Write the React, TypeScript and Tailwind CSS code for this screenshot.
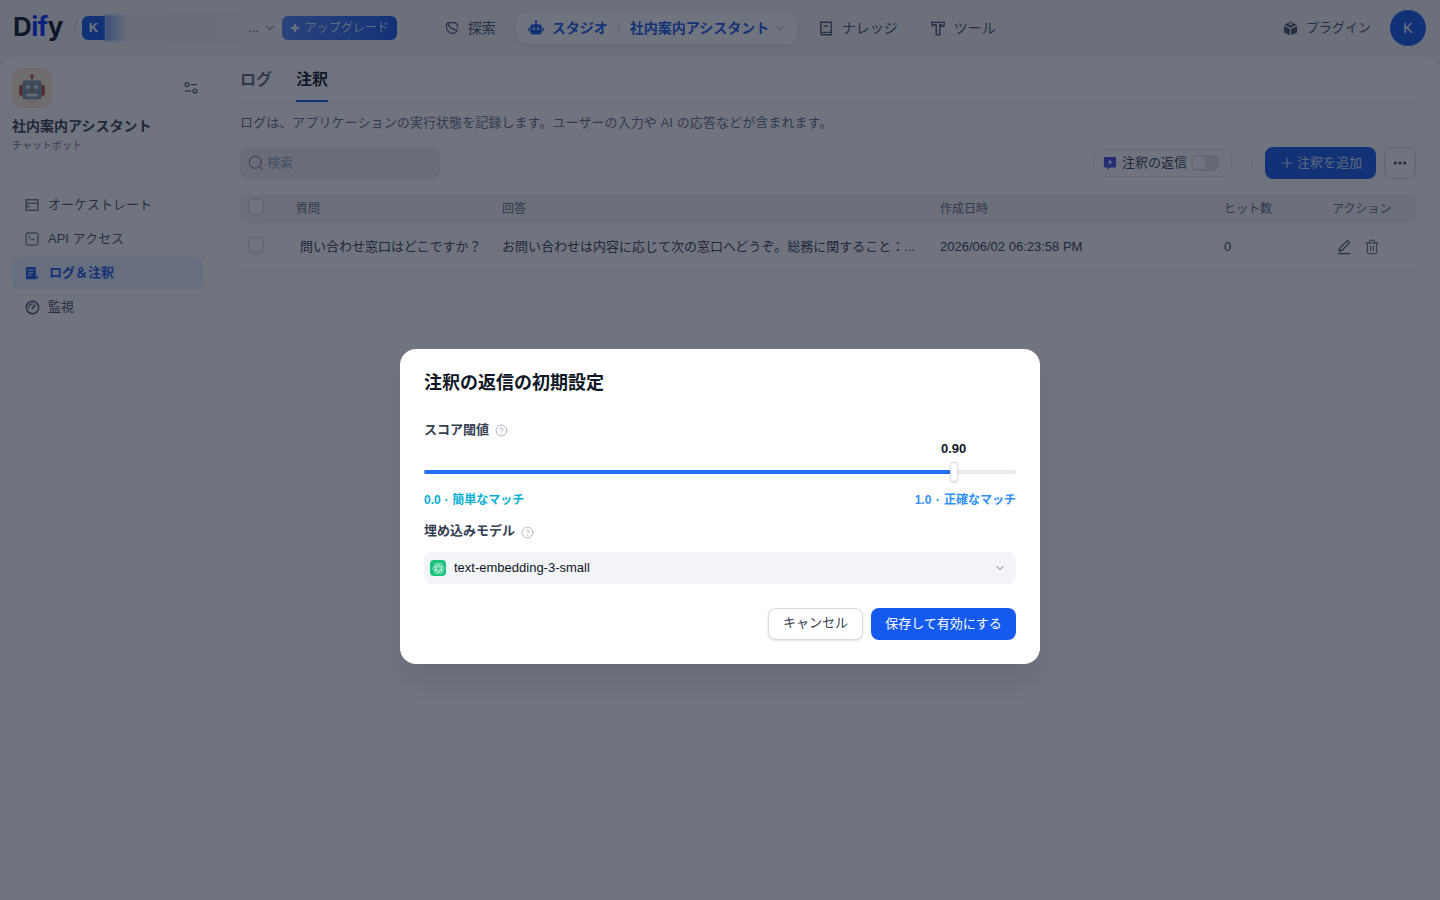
import React from "react";
import { ChevronDown, Plus, Search, Sparkle, Trash2, Ellipsis, SquareTerminal, CircleHelp } from "lucide-react";

const font = "font-['Liberation_Sans','Noto_Sans_CJK_JP',sans-serif]";

function Robot() {
  return (
    <svg viewBox="0 0 32 32" className="w-[30px] h-[30px]">
      <line x1="16" y1="3" x2="16" y2="8" stroke="#6b7c8c" strokeWidth="1.6" />
      <circle cx="16" cy="3.5" r="1.8" fill="#c0392b" />
      <rect x="2.5" y="13" width="3.5" height="11" rx="1.4" fill="#c0392b" />
      <rect x="26" y="13" width="3.5" height="11" rx="1.4" fill="#c0392b" />
      <rect x="5.5" y="8" width="21" height="20" rx="3.5" fill="#7f97ab" />
      <circle cx="11.5" cy="15" r="2.2" fill="#dfe7ee" />
      <circle cx="20.5" cy="15" r="2.2" fill="#dfe7ee" />
      <path d="M16 17l1.2 2h-2.4z" fill="#c0392b" />
      <rect x="10" y="22" width="12" height="3" rx="1" fill="#dfe7ee" />
    </svg>
  );
}

function ExploreIcon() {
  return (
    <svg viewBox="0 0 16 16" fill="none" stroke="currentColor" strokeWidth="1.3" className="w-[14px] h-[14px]">
      <path d="M3.2 1.8h6.2c3 0 5 2.2 5 5.2 0 .4 0 .8-.1 1.2" />
      <path d="M3.2 1.8C2 3 1.6 4.5 1.6 6.2c0 4.4 3.2 8 7.2 8 2.4 0 4.4-1.6 5.2-3.8" />
      <path d="M3.2 1.8c.6 4.6 4.6 8.4 10.8 8.6" />
    </svg>
  );
}

function BotIcon() {
  return (
    <svg viewBox="0 0 16 16" className="w-4 h-4" fill="currentColor">
      <circle cx="8" cy="1.6" r="1.3" />
      <rect x="7.4" y="2" width="1.2" height="3" />
      <rect x="2.2" y="4.2" width="11.6" height="10.2" rx="2.6" />
      <rect x="0.2" y="7.5" width="1.3" height="3.8" rx=".6" />
      <rect x="14.5" y="7.5" width="1.3" height="3.8" rx=".6" />
      <rect x="4.9" y="7.4" width="1.7" height="2.6" rx=".8" fill="#ffffff" />
      <rect x="9.4" y="7.4" width="1.7" height="2.6" rx=".8" fill="#ffffff" />
    </svg>
  );
}

function BookIcon() {
  return (
    <svg viewBox="0 0 16 16" fill="none" stroke="currentColor" strokeWidth="1.4" className="w-4 h-4">
      <path d="M2.8 12.4V2.2h10.4v12.6H4a1.2 1.2 0 0 1-1.2-1.2c0-.7.5-1.2 1.2-1.2h9.2" />
      <path d="M5.6 6h4.8" />
    </svg>
  );
}

function HammerIcon() {
  return (
    <svg viewBox="0 0 16 16" fill="none" stroke="currentColor" strokeWidth="1.4" strokeLinejoin="round" className="w-4 h-4">
      <path d="M1.6 2.4h12.8l-.4 3.8h-2.600V4.800H9.800v10H6.200v-10H4.400c-1 0-1.600.6-2.200 1.200z" />
    </svg>
  );
}

function CubeIcon() {
  return (
    <svg viewBox="0 0 16 16" className="w-[15px] h-[15px]" fill="currentColor">
      <path d="M8 .8l6.600 3.200L8 7.200 1.400 4z" />
      <path d="M1 5.200l6.400 3.100v7L1 12.200z" />
      <path d="M15 5.200L8.600 8.300v7l6.400-3.100z" />
      <ellipse cx="8" cy="3.200" rx="2" ry="1" fill="#f2f4f7" />
    </svg>
  );
}

function LayoutIcon() {
  return (
    <svg viewBox="0 0 16 16" fill="none" stroke="currentColor" strokeWidth="1.3" className="w-[14px] h-[14px]">
      <rect x="1.2" y="2" width="13.6" height="12" />
      <path d="M1.2 6h13.600M1.200 10h4.600" />
      <path d="M3 4h1M3 8h1" />
    </svg>
  );
}

function LogIcon() {
  return (
    <svg viewBox="0 0 16 16" className="w-[14px] h-[14px]" fill="currentColor">
      <path d="M2 1h9.600a.8.8 0 0 1 .8.8V15H2a.8.8 0 0 1-.8-.8V1.800A.8.8 0 0 1 2 1z" />
      <path d="M13.200 11H15v2.400a1.600 1.600 0 0 1-1.600 1.600h-.2z" />
      <path d="M3.600 4.600h6M3.600 7.600h6M3.600 10.600h3.600" stroke="#e8effe" strokeWidth="1.200" />
    </svg>
  );
}

function GaugeIcon() {
  return (
    <svg viewBox="0 0 16 16" fill="none" stroke="currentColor" strokeWidth="1.6" className="w-[15px] h-[15px]">
      <circle cx="8" cy="8" r="6.600" />
      <path d="M4 9a4 4 0 0 1 5-4.600" strokeWidth="1.300" />
      <path d="M7.200 9.600l4-4.400" strokeWidth="1.600" />
    </svg>
  );
}

function PenIcon() {
  return (
    <svg viewBox="0 0 16 16" fill="none" stroke="currentColor" strokeWidth="1.300" strokeLinejoin="round" className="w-4 h-4">
      <path d="M3.200 12l.6-2.800 6.800-6.800a1.300 1.300 0 0 1 1.900 0l.3.3a1.300 1.300 0 0 1 0 1.900L6 11.400z" />
      <path d="M1.800 14.600h12.400" />
    </svg>
  );
}

function ReplyIcon() {
  return (
    <svg viewBox="0 0 16 16" className="w-[14px] h-[14px]">
      <path d="M2.500 1h11A1.500 1.500 0 0 1 15 2.500v9a1.500 1.500 0 0 1-1.500 1.500H8l-3 2.600V13H2.500A1.500 1.500 0 0 1 1 11.500v-9A1.500 1.500 0 0 1 2.500 1z" fill="#444ce7" />
      <path d="M8.800 3.200L5.400 7.800h2.400l-.6 3 3.400-4.600H8.200z" fill="#ffffff" />
    </svg>
  );
}

function OpenAIIcon() {
  return (
    <span className="w-4 h-4 rounded-[4px] bg-[#19c37d] flex items-center justify-center shrink-0">
      <svg viewBox="0 0 16 16" fill="none" stroke="#ffffff" strokeWidth="0.7" className="w-[13px] h-[13px]">
        <circle cx="8" cy="8" r="2" />
        <ellipse cx="8" cy="8" rx="7" ry="3.400" />
        <ellipse cx="8" cy="8" rx="7" ry="3.400" transform="rotate(60 8 8)" />
        <ellipse cx="8" cy="8" rx="7" ry="3.400" transform="rotate(120 8 8)" />
      </svg>
    </span>
  );
}

function Check() {
  return <span className="block w-4 h-4 rounded-[4px] border border-[#d0d5dd] bg-[#fcfcfd] shadow-[0_1px_2px_rgba(16,24,40,0.05)]" />;
}

function NavItem({ icon, label, active }: { icon: React.ReactNode; label: string; active?: boolean }) {
  return (
    <div className={`h-8 rounded-lg flex items-center pl-3 text-[13px] ${active ? "bg-[#e8effe] text-[#155aef] font-semibold gap-[9px]" : "text-[#495464] gap-2"}`}>
      <span className="w-4 flex justify-center">{icon}</span>
      <span>{label}</span>
    </div>
  );
}

const cols = "grid grid-cols-[56px_206px_438px_285px_107px_84px] items-center";

export default function App() {
  return (
    <div className={`relative h-[900px] w-[1440px] overflow-hidden bg-[#f2f4f7] ${font}`}>
      {/* top bar */}
      <header className="h-14 flex items-center pl-[13px] pr-[14px] relative">
        <div className="w-[69px] flex items-center pb-[2px]">
          <span className="text-[26px] leading-none font-bold tracking-[-0.5px] text-[#101828] font-['Inter',sans-serif]">
            D<span className="text-[#0033ff]">if</span>y
          </span>
        </div>
        <span className="text-[#d0d5dd] text-base w-0 -ml-[9px] mr-[9px]">/</span>
        <div className="w-[23px] h-6 rounded-l-md bg-[#155aef] flex items-center justify-center text-white text-[13px] font-semibold">K</div>
        <div className="w-[138px] h-[26px] bg-[linear-gradient(90deg,#7fa3f5_0%,#e9ebf0_16%,#eef0f4_100%)] blur-[1px]" />
        <span className="text-[#495464] text-[13px] ml-[5px]">...</span>
        <ChevronDown className="w-[14px] h-[14px] text-[#98a2b2] ml-[4px]" />
        <div className="ml-[5px] w-[115px] h-6 rounded-md bg-gradient-to-r from-[#4d83f7] to-[#155aef] text-[#d5e0fa] text-xs flex items-center pl-[8px] gap-[5px]">
          <Sparkle className="w-[10px] h-[10px] fill-white text-white" />
          <span>アップグレード</span>
        </div>
        <nav className="flex items-center ml-[48px] text-[14px] text-[#495464]">
          <div className="flex items-center gap-[9px]"><ExploreIcon /><span>探索</span></div>
          <div className="ml-[20px] w-[282px] h-8 rounded-xl bg-white shadow-[0_2px_4px_rgba(16,24,40,0.08)] flex items-center pl-[12px] text-[#155aef] font-semibold">
            <BotIcon />
            <span className="ml-2">スタジオ</span>
            <span className="mx-[9px] text-[#d0d5dd] font-normal">/</span>
            <span>社内案内アシスタント</span>
            <ChevronDown className="w-3 h-3 ml-[5px] text-[#98a2b2]" />
          </div>
          <div className="ml-[20px] flex items-center gap-[8px]"><BookIcon /><span>ナレッジ</span></div>
          <div className="ml-[32px] flex items-center gap-[8px]"><HammerIcon /><span>ツール</span></div>
        </nav>
        <div className="ml-auto flex items-center text-[13px] text-[#495464]">
          <CubeIcon />
          <span className="ml-[8px]">プラグイン</span>
          <span className="ml-[19px] w-9 h-9 rounded-full bg-[#155aef] text-white text-sm flex items-center justify-center">K</span>
        </div>
      </header>

      {/* body */}
      <div className="h-[844px] bg-white rounded-t-2xl flex">
        <aside className="w-[216px] shrink-0 border-r border-[#f2f4f7] px-3 pt-3">
          <div className="flex items-start justify-between pr-[3px]">
            <div className="w-10 h-10 rounded-[10px] bg-[#ffead5] border border-[#f2e3d4] flex items-center justify-center"><Robot /></div>
            <svg viewBox="0 0 16 16" fill="none" stroke="#495464" strokeWidth="1.200" className="w-4 h-4 mt-3 mr-[1px]">
              <circle cx="4" cy="4.600" r="2" /><path d="M8 4.600h6" />
              <circle cx="12" cy="11" r="2" /><path d="M2 11h6" />
            </svg>
          </div>
          <div className="mt-[8px] text-[14px] leading-5 font-semibold text-[#354052]">社内案内アシスタント</div>
          <div className="text-[10px] leading-[16px] text-[#676f83] mt-[2px]">チャットボット</div>
          <div className="mt-[9px] h-px bg-[#f2f4f7] mx-1" />
          <div className="mt-[25px] flex flex-col gap-[2px]">
            <NavItem icon={<LayoutIcon />} label="オーケストレート" />
            <NavItem icon={<SquareTerminal strokeWidth={1.500} className="w-4 h-4" />} label="API アクセス" />
            <NavItem icon={<LogIcon />} label={"ログ\uFF06注釈"} active />
            <NavItem icon={<GaugeIcon />} label="監視" />
          </div>
        </aside>

        <main className="flex-1 px-6">
          <div className="h-[47px] border-b border-[#f2f4f7] flex gap-6 text-base font-semibold">
            <div className="text-[#676f83] pt-[12px]">ログ</div>
            <div className="text-[#101828] pt-[12px] h-[46px] border-b-2 border-[#155aef]">注釈</div>
          </div>
          <p className="mt-[10px] text-[13px] leading-5 tracking-[0.085px] text-[#676f83]">ログは、アプリケーションの実行状態を記録します。ユーザーの入力や AI の応答などが含まれます。</p>
          <div className="mt-[14px] flex items-center">
            <div className="w-[200px] h-8 rounded-lg bg-[#eceef2] flex items-center pl-[7px] gap-[2px] text-[13px] text-[#98a2b2]">
              <Search className="w-[18px] h-[18px] text-[#676f83]" strokeWidth={1.300} />
              <span>検索</span>
            </div>
            <div className="ml-auto w-[139px] h-7 rounded-lg border border-[#e9ebf0] bg-white flex items-center pl-[9px] text-[13px] text-[#354052]">
              <ReplyIcon />
              <span className="ml-[5px]">注釈の返信</span>
              <span className="ml-[4px] w-7 h-4 rounded-[5px] bg-[#e0e3e8] p-[2px]"><span className="block w-3 h-3 rounded-[3px] bg-white" /></span>
            </div>
            <span className="ml-[20px] w-px h-[14px] bg-[#e9ebf0]" />
            <div className="ml-[12px] w-[111px] h-8 rounded-lg bg-[#155aef] text-[#d5e0fa] text-[13px] flex items-center pl-[14px] gap-[2px]">
              <Plus className="w-[16px] h-[16px]" strokeWidth={1.800} />
              <span>注釈を追加</span>
            </div>
            <div className="ml-2 w-8 h-8 rounded-lg border border-[#d9dde3] bg-white flex items-center justify-center text-[#354052]">
              <Ellipsis className="w-4 h-4" strokeWidth={2.600} />
            </div>
          </div>

          <div className={`mt-4 h-7 rounded-lg bg-[#f2f4f7] text-xs text-[#676f83] ${cols}`}>
            <div className="pl-2 -mt-[4px]"><Check /></div>
            <div>質問</div>
            <div>回答</div>
            <div>作成日時</div>
            <div className="-ml-px">ヒット数</div>
            <div>アクション</div>
          </div>
          <div className={`h-12 border-b border-[#f2f4f7] text-[13px] text-[#354052] ${cols}`}>
            <div className="pl-2 -mt-[4px]"><Check /></div>
            <div className="pl-1">{"問い合わせ窓口はどこですか\uFF1F"}</div>
            <div className="whitespace-nowrap">{"お問い合わせは内容に応じて次の窓口へどうぞ。総務に関すること\uFF1A..."}</div>
            <div>2026/06/02 06:23:58 PM</div>
            <div className="-ml-px">0</div>
            <div className="flex items-center gap-[12px] pl-[4px] text-[#495464]">
              <PenIcon />
              <Trash2 className="w-4 h-4" strokeWidth={1.400} />
            </div>
          </div>
        </main>
      </div>

      {/* overlay + dialog */}
      <div className="absolute inset-0 bg-[#101828]/60 flex items-start justify-center pt-[349px]">
        <div className="w-[640px] h-[315px] rounded-2xl bg-white p-6 shadow-[0_20px_24px_-4px_rgba(16,24,40,0.08)]">
          <h2 className="text-lg leading-[20px] font-semibold text-[#101828]">注釈の返信の初期設定</h2>
          <div className="mt-[27px] flex items-center text-[13px] font-semibold leading-5 text-[#354052]">
            <span>スコア閾値</span>
            <CircleHelp className="w-[13px] h-[13px] ml-[6px] mt-[1px] text-[#98a2b2]" strokeWidth={1.400} />
          </div>
          <div className="relative h-[41px]">
            <span className="absolute left-[517px] top-px text-[13px] leading-4 font-semibold text-[#101828]">0.90</span>
            <div className="absolute left-0 right-0 top-[30px] h-1 rounded-full bg-[#e9ebf0]" />
            <div className="absolute left-0 w-[527px] top-[30px] h-1 rounded-l-full bg-[#296dff]" />
            <div className="absolute left-[526px] top-[22px] w-2 h-5 rounded-[3px] bg-white border border-[#d9dde3] shadow-sm" />
          </div>
          <div className="mt-[11px] flex justify-between text-xs font-semibold leading-4">
            <span className="text-[#06aed4]">0.0<span className="mx-[0.5px]"> · </span>簡単なマッチ</span>
            <span className="text-[#2e90fa]">1.0<span className="mx-[1px]"> · </span>正確なマッチ</span>
          </div>
          <div className="mt-[13px] flex items-center text-[13px] font-semibold leading-5 text-[#354052]">
            <span>埋め込みモデル</span>
            <CircleHelp className="w-[13px] h-[13px] ml-[6px] mt-[2px] text-[#98a2b2]" strokeWidth={1.400} />
          </div>
          <div className="mt-[11px] h-8 rounded-lg bg-[#f2f4f7] flex items-center pl-[6px] pr-[10px] text-[13px] text-[#354052]">
            <OpenAIIcon />
            <span className="ml-2 text-[#101828]">text-embedding-3-small</span>
            <ChevronDown className="w-[12px] h-[12px] ml-auto text-[#676f83]" />
          </div>
          <div className="mt-6 flex justify-end gap-2 text-[13px]">
            <div className="w-[95px] h-8 pb-[2px] rounded-lg border border-[#d9dde3] bg-white text-[#354052] flex items-center justify-center shadow-sm">キャンセル</div>
            <div className="w-[145px] h-8 pb-[1px] rounded-lg bg-[#155aef] text-white flex items-center justify-center">保存して有効にする</div>
          </div>
        </div>
      </div>
    </div>
  );
}
